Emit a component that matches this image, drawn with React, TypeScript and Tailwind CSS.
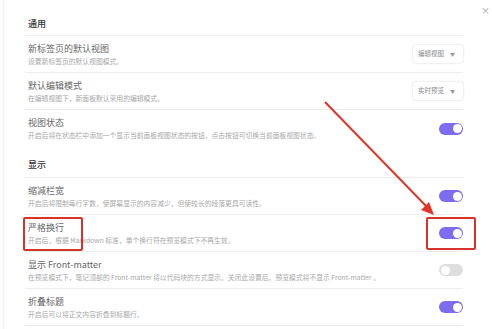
import React from "react";

type Row = {
  title: string;
  desc: string;
  control: "select" | "on" | "off";
  value?: string;
  border?: boolean;
};

const general: Row[] = [
  { title: "新标签页的默认视图", desc: "设置新标签页的默认视图模式。", control: "select", value: "编辑视图", border: true },
  { title: "默认编辑模式", desc: "在编辑视图下，新面板默认采用的编辑模式。", control: "select", value: "实时预览", border: true },
  {
    title: "视图状态",
    desc: "开启后将在状态栏中添加一个显示当前面板视图状态的按钮，点击按钮可切换当前面板视图状态。",
    control: "on",
  },
];

const display: Row[] = [
  { title: "缩减栏宽", desc: "开启后将限制每行字数，使屏幕显示的内容减少，但使较长的段落更具可读性。", control: "on", border: true },
  { title: "严格换行", desc: "开启后，根据 Markdown 标准，单个换行符在预览模式下不再生效。", control: "on", border: true },
  {
    title: "显示 Front-matter",
    desc: "在预览模式下，笔记顶部的 Front-matter 将以代码块的方式显示。关闭此设置后，预览模式将不显示 Front-matter 。",
    control: "off",
    border: true,
  },
  { title: "折叠标题", desc: "开启后可以将正文内容折叠到标题行。", control: "on", border: true },
];

function Toggle({ on }: { on: boolean }) {
  return (
    <div
      className={`w-[24px] h-[12px] rounded-full flex items-center px-[1.5px] shrink-0 ${
        on ? "bg-[#7d6bf0] justify-end" : "bg-[#dedede] justify-start"
      }`}
    >
      <div className="w-[9px] h-[9px] rounded-full bg-white" />
    </div>
  );
}

function Select({ value }: { value: string }) {
  return (
    <div className="h-[18px] w-[50px] shrink-0 rounded-[3px] bg-white shadow-[0_0_2px_rgba(0,0,0,0.22)] flex items-center pl-[5px] gap-[6px] text-[6.5px] text-[#8a8a8a]">
      <span>{value}</span>
      <span className="text-[5px] text-[#999]">▼</span>
    </div>
  );
}

function SettingRow({ row }: { row: Row }) {
  return (
    <div className={`h-[37px] flex items-center justify-between ${row.border ? "border-b border-[#ececec]" : ""}`}>
      <div className="min-w-0 pl-[3px] flex flex-col">
        <div className="text-[9px] leading-[13px] text-[#666]">{row.title}</div>
        <div className="mt-[1px] text-[6.8px] leading-[11px] text-[#a8a8a8] whitespace-nowrap">{row.desc}</div>
      </div>
      {row.control === "select" ? <Select value={row.value!} /> : <Toggle on={row.control === "on"} />}
    </div>
  );
}

export default function App() {
  return (
    <div
      className="relative w-[492px] h-[329px] overflow-hidden bg-white"
      style={{ fontFamily: '"Noto Sans CJK SC", "Noto Sans", sans-serif' }}
    >
      <div className="absolute left-[3px] top-0 bottom-0 w-px bg-[#f0f0f0]" />
      <div className="absolute left-[481px] top-[4px] text-[9px] text-[#999]">×</div>

      <div className="ml-[25px] w-[438px] pt-[12px]">
        <div className="h-[24px] flex items-end pb-[4px] pl-[3px] border-b border-[#ececec] text-[9px] leading-[14px] font-medium text-[#333]">
          通用
        </div>
        {general.map((r) => (
          <SettingRow key={r.title} row={r} />
        ))}
        <div className="h-[31px] flex items-end pb-[5px] pl-[3px] border-b border-[#ececec] text-[9px] leading-[14px] font-medium text-[#333]">
          显示
        </div>
        {display.map((r) => (
          <SettingRow key={r.title} row={r} />
        ))}
      </div>

      {/* annotation boxes */}
      <div className="absolute left-[23px] top-[217px] w-[60px] h-[34px] border-2 border-[#d8332b] rounded-[2px]" />
      <div className="absolute left-[426px] top-[217px] w-[50px] h-[33px] border-2 border-[#d8332b] rounded-[2px]" />

      {/* annotation arrow */}
      <svg className="absolute inset-0 pointer-events-none" width="492" height="329" viewBox="0 0 492 329">
        <line x1="325" y1="102" x2="428" y2="208" stroke="#e0352b" strokeWidth="2" />
        <polygon points="434,215 421,210 429,202" fill="#e0352b" />
      </svg>
    </div>
  );
}
